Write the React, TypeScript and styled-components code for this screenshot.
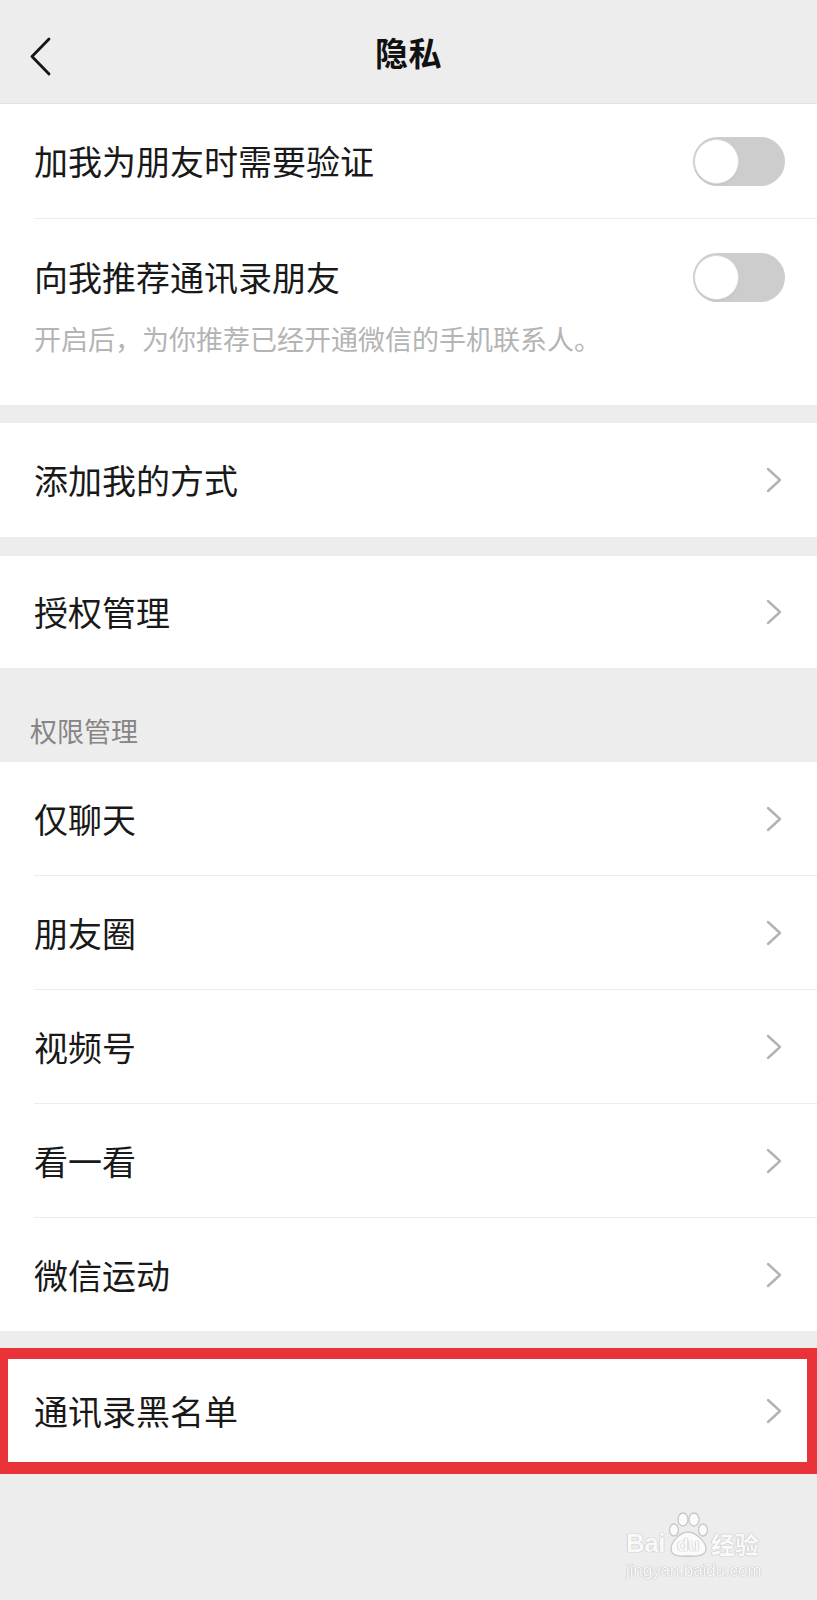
import React from 'react';
import styled, { createGlobalStyle } from 'styled-components';

const GlobalStyle = createGlobalStyle`
  html, body {
    margin: 0;
    padding: 0;
    background: #ededed;
  }

  body {
    font-family: 'Noto Sans CJK SC', 'Noto Sans', sans-serif;
    color: #191919;
  }
`;

const Page = styled.div`
  position: relative;
  width: 817px;
  min-height: 1600px;
  background: #ededed;
  overflow: hidden;
`;

const NavBar = styled.header`
  position: relative;
  height: 103px;
  display: flex;
  align-items: center;
  justify-content: center;
  border-bottom: 1px solid #e2e2e2;
  background: #ededed;
`;

const BackIcon = styled.svg`
  position: absolute;
  left: 30px;
  top: 37px;
`;

const NavTitle = styled.h1`
  margin: 0;
  font-size: 33px;
  line-height: 44px;
  font-weight: 700;
  color: #111;
  letter-spacing: 0.5px;
`;

const Group = styled.section<{ $gap?: number }>`
  margin-top: ${(p) => p.$gap ?? 0}px;
  background: #fff;
`;

const Row = styled.div<{ $height?: number }>`
  height: ${(p) => p.$height ?? 114}px;
  box-sizing: border-box;
  display: flex;
  align-items: center;
  justify-content: space-between;
  padding: 0 32px 0 34px;
  background: #fff;
`;

const Label = styled.span`
  font-size: 34px;
  line-height: 44px;
  color: #191919;
`;

const Divider = styled.div`
  height: 1px;
  margin-left: 34px;
  background: #ececec;
`;

const ToggleBlock = styled.div`
  padding: 38px 32px 48px 34px;
`;

const ToggleLine = styled.div`
  height: 40px;
  display: flex;
  align-items: center;
  justify-content: space-between;
`;

const Hint = styled.p`
  margin: 24px 0 0;
  font-size: 27px;
  line-height: 36px;
  color: #b4b4b4;
`;

const Track = styled.div`
  width: 92px;
  height: 49px;
  border-radius: 25px;
  background: #cdcdcd;
  display: flex;
  align-items: center;
  padding-left: 1px;
  box-sizing: border-box;
`;

const Knob = styled.div`
  width: 45px;
  height: 45px;
  border-radius: 50%;
  background: #fff;
  border: 1px solid #d9d9d9;
  box-sizing: border-box;
  box-shadow: 0 1px 2px rgba(0, 0, 0, 0.06);
`;

const ChevronIcon = styled.svg`
  margin-right: 3px;
  flex-shrink: 0;
`;

const SectionTitle = styled.div`
  padding: 45px 30px 13px;
  font-size: 27px;
  line-height: 36px;
  color: #858585;
`;

const HighlightRow = styled(Row)`
  margin-top: 17px;
  height: 126px;
  border-style: solid;
  border-color: #ea3338;
  border-width: 11px 10px 12px 8px;
  padding: 0 22px 0 26px;
`;

// baidu jingyan watermark laid over the empty bottom area
const Watermark = styled.div`
  position: absolute;
  left: 626px;
  top: 1512px;
  display: flex;
  flex-direction: column;
  align-items: flex-start;
  color: #f9f9f9;
  text-shadow: 0 0 1px #c4c4c4, 0 0 1px #c4c4c4, 0 0 1px #c4c4c4;
  pointer-events: none;
`;

const MarkLine = styled.div`
  display: flex;
  align-items: flex-end;
  height: 46px;
`;

const MarkBrand = styled.span`
  font-family: 'Liberation Sans', Arial, sans-serif;
  font-weight: 700;
  font-size: 26px;
  line-height: 26px;
  margin-bottom: 2px;
  letter-spacing: -0.5px;
`;

const Paw = styled.span`
  position: relative;
  width: 44px;
  height: 46px;
  margin-left: 1px;
`;

const PawText = styled.span`
  position: absolute;
  left: 11px;
  bottom: 4px;
  font-family: 'Liberation Sans', Arial, sans-serif;
  font-weight: 700;
  font-size: 19px;
  line-height: 19px;
  letter-spacing: -0.5px;
`;

const MarkCjk = styled.span`
  margin-left: 1px;
  font-size: 24px;
  line-height: 28px;
  font-weight: 700;
`;

const MarkUrl = styled.span`
  margin-top: 3px;
  font-family: 'Liberation Sans', Arial, sans-serif;
  font-size: 17px;
  line-height: 20px;
  letter-spacing: -0.1px;
`;

const Chevron = () => (
  <ChevronIcon
    fill='none'
    height='26'
    viewBox='0 0 16 26'
    width='16'
  >
    <polyline
      points='2,2 14,13 2,24'
      stroke='#b3b3b3'
      strokeLinecap='round'
      strokeLinejoin='round'
      strokeWidth='2.4'
    />
  </ChevronIcon>
);

const Switch = () => (
  <Track>
    <Knob />
  </Track>
);

const permissionItems = ['仅聊天', '朋友圈', '视频号', '看一看', '微信运动'];

const App: React.FC = () => {
  return (
    <Page>
      <GlobalStyle />
      <NavBar>
        <BackIcon
          fill='none'
          height='40'
          viewBox='0 0 22 40'
          width='22'
        >
          <polyline
            points='19,2 2,19.5 19,37'
            stroke='#151515'
            strokeLinecap='round'
            strokeLinejoin='round'
            strokeWidth='2.8'
          />
        </BackIcon>
        <NavTitle>隐私</NavTitle>
      </NavBar>

      <Group>
        <Row>
          <Label>加我为朋友时需要验证</Label>
          <Switch />
        </Row>
        <Divider />
        <ToggleBlock>
          <ToggleLine>
            <Label>向我推荐通讯录朋友</Label>
            <Switch />
          </ToggleLine>
          <Hint>开启后，为你推荐已经开通微信的手机联系人。</Hint>
        </ToggleBlock>
      </Group>

      <Group $gap={18}>
        <Row>
          <Label>添加我的方式</Label>
          <Chevron />
        </Row>
      </Group>

      <Group $gap={19}>
        <Row $height={112}>
          <Label>授权管理</Label>
          <Chevron />
        </Row>
      </Group>

      <SectionTitle>权限管理</SectionTitle>

      <Group>
        {permissionItems.map((item, index) => (
          <React.Fragment key={item}>
            {index > 0 && <Divider />}
            <Row $height={113}>
              <Label>{item}</Label>
              <Chevron />
            </Row>
          </React.Fragment>
        ))}
      </Group>

      <HighlightRow>
        <Label>通讯录黑名单</Label>
        <Chevron />
      </HighlightRow>

      <Watermark>
        <MarkLine>
          <MarkBrand>Bai</MarkBrand>
          <Paw>
            <svg
              height='46'
              viewBox='0 0 44 46'
              width='44'
            >
              <g
                fill='#fbfbfb'
                stroke='#c8c8c8'
                strokeWidth='1.3'
              >
                <ellipse cx='8' cy='18' rx='4.5' ry='6' />
                <ellipse cx='17' cy='7.5' rx='5' ry='6.5' />
                <ellipse cx='28' cy='7.5' rx='5' ry='6.5' />
                <ellipse cx='37' cy='18' rx='4.5' ry='6' />
                <path d='M22 20 C14 20 5 30 5 37 C5 43 11 45 22 44 C33 45 40 43 40 37 C40 30 30 20 22 20 Z' />
              </g>
            </svg>
            <PawText>du</PawText>
          </Paw>
          <MarkCjk>经验</MarkCjk>
        </MarkLine>
        <MarkUrl>jingyan.baidu.com</MarkUrl>
      </Watermark>
    </Page>
  );
};

export default App;
